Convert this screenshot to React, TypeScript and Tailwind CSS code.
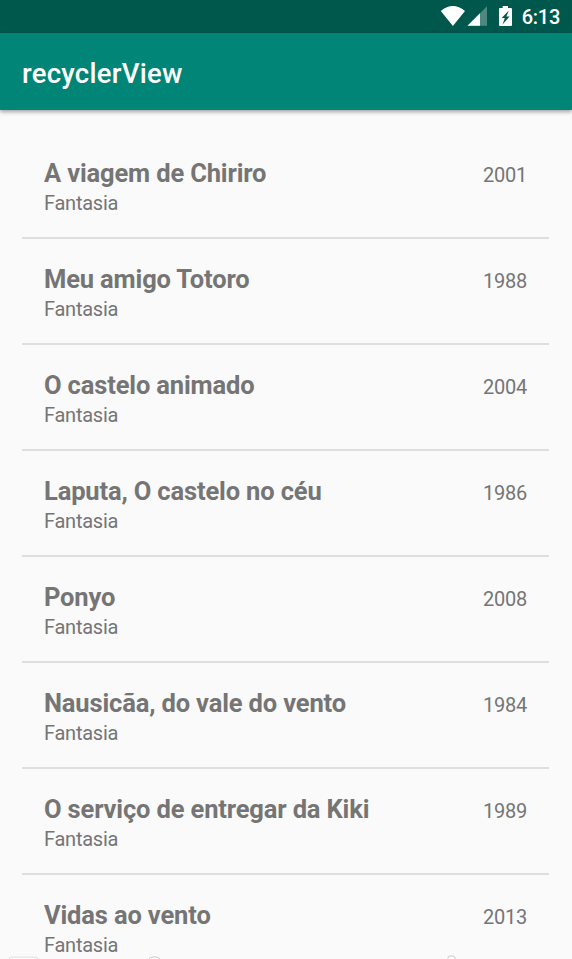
const movies = [
  ["A viagem de Chiriro", "2001"],
  ["Meu amigo Totoro", "1988"],
  ["O castelo animado", "2004"],
  ["Laputa, O castelo no céu", "1986"],
  ["Ponyo", "2008"],
  ["Nausicãa, do vale do vento", "1984"],
  ["O serviço de entregar da Kiki", "1989"],
  ["Vidas ao vento", "2013"],
];

export default function App() {
  return (
    <div className="relative flex h-[959px] w-[572px] flex-col overflow-hidden bg-[#fafafa] font-['Roboto',sans-serif]">
      <div className="flex h-[33px] shrink-0 items-center justify-end bg-[#00574b] pr-3 text-white">
        <svg className="mr-[2px] h-[33px] w-[80px]" viewBox="440 0 80 33">
          <path d="M440.8 11Q452.8 1 465 11L452.9 26Z" fill="#fff" />
          <path d="M467.5 25.8L487 6.3V25.8Z" fill="#fff" fillOpacity=".3" />
          <path d="M467.5 25.8L480 13.3V25.8Z" fill="#fff" />
          <path d="M502.7 6h5.3v2h3q1 0 1 1v16q0 1-1 1h-11q-1 0-1-1V9q0-1 1-1h2.7z" fill="#fff" />
          <path d="M508.8 10.5L501.7 18h3.1l-2.3 6.5 7.1-8h-3.2z" fill="#00574b" />
        </svg>
        <span className="pt-[2px] text-[20px] font-medium leading-[31px] tracking-[-0.25px]">6:13</span>
      </div>
      <header className="z-10 flex h-[77px] shrink-0 items-center bg-[#008577] pl-[22px] pt-[4px] shadow-[0_2px_4px_rgba(0,0,0,0.35)]">
        <h1 className="text-[27.5px] font-medium leading-8 tracking-[0.25px] text-white">recyclerView</h1>
      </header>
      <main className="flex flex-col pl-[22px] pr-[23px] pt-[23px]">
        {movies.map(([title, year]) => (
          <div key={title} className="flex h-[106px] shrink-0 justify-between border-b-2 border-[#dedede] px-[22px] pt-[24px] text-[#757575]">
            <div>
              <h2 className="text-[25.5px] font-bold leading-8 tracking-[-0.15px]">{title}</h2>
              <p className="pt-px text-[20px] leading-[27px] tracking-[-0.25px]">Fantasia</p>
            </div>
            <span className="pt-1 text-[20px] leading-7 tracking-[-0.25px]">{year}</span>
          </div>
        ))}
      </main>
      <svg className="absolute bottom-0 left-0 h-1 w-full" viewBox="0 0 572 4" fill="#fff" stroke="#c9c9c9">
        <path d="M9 5Q9 2.2 12 2.2H35Q38 2.2 38 5" stroke="#dedede" />
        <path d="M148 5Q150 2 153 2H156Q159 2 161 5" />
        <path d="M448 5V3Q448 1 450 1H453Q455 1 455 3V5" />
      </svg>
    </div>
  );
}
